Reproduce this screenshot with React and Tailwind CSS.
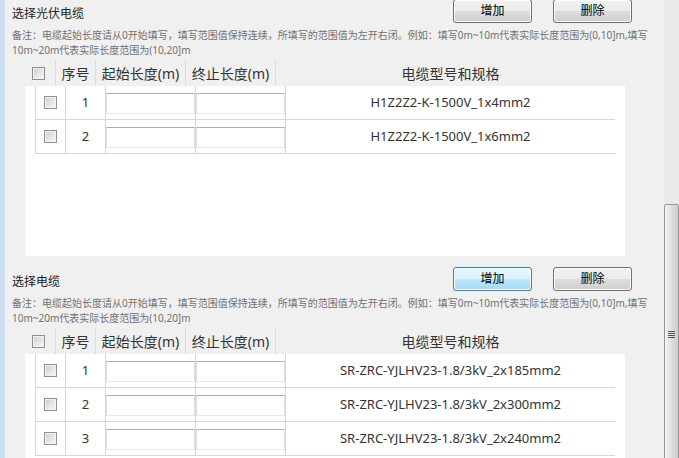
const pvRows = ['H1Z2Z2-K-1500V_1x4mm2', 'H1Z2Z2-K-1500V_1x6mm2'];
const cableRows = [
  'SR-ZRC-YJLHV23-1.8/3kV_2x185mm2',
  'SR-ZRC-YJLHV23-1.8/3kV_2x300mm2',
  'SR-ZRC-YJLHV23-1.8/3kV_2x240mm2',
];

const Check = () => (
  <span className="block w-[13px] h-[13px] border border-[#8f8f8f] bg-linear-to-br from-[#cdcdcd] to-[#fbfbfb] shadow-[inset_0_0_0_1px_#f2f2f2]" />
);

const Btn = ({ focused, children }) => (
  <button
    className={`w-[79px] h-6 rounded-[3px] border text-[12px] leading-none text-black ${
      focused
        ? 'border-[#3c7fb1] bg-[linear-gradient(#eaf6fd_0%,#d9f0fc_50%,#bee6fd_50%,#a7d9f5_100%)] shadow-[inset_0_0_0_1px_#f4fbff]'
        : 'border-[#707070] bg-[linear-gradient(#f2f2f2_0%,#ebebeb_50%,#dddddd_50%,#cfcfcf_100%)] shadow-[inset_0_0_0_1px_#fcfcfc]'
    }`}
  >
    {children}
  </button>
);

const Field = () => (
  <div className="h-[21px] w-full bg-white border border-t-[#abadb3] border-l-[#dbdfe6] border-r-[#dbdfe6] border-b-[#e3e9ef]" />
);

function Section({ title, rows, focused }) {
  return (
    <div className="h-[268px] shrink-0 flex flex-col">
      {/* title + buttons */}
      <div className="h-6 flex items-center">
        <span className="flex-1 pl-[7px] pt-[5px] text-[12px] leading-none text-[#222]">{title}</span>
        <div className="flex gap-[21px] mr-[31px]">
          <Btn focused={focused}>增加</Btn>
          <Btn>删除</Btn>
        </div>
      </div>

      {/* note */}
      <div className="mt-[5px] pl-[7px] text-[10px] leading-[15px] text-[#707070] whitespace-nowrap">
        <p>备注：电缆起始长度请从0开始填写，填写范围值保持连续，所填写的范围值为左开右闭。例如：填写0m~10m代表实际长度范围为(0,10]m,填写</p>
        <p>10m~20m代表实际长度范围为(10,20]m</p>
      </div>

      {/* header */}
      <div className="mt-[2px] h-[26px] ml-[20px] flex text-[14px] text-[#333]">
        <div className="w-[30px] flex items-center pl-[7px]">
          <Check />
        </div>
        <div className="w-[40px] border-l border-[#dcdcdc] flex items-center justify-center">序号</div>
        <div className="w-[90px] border-l border-[#dcdcdc] flex items-center justify-center">起始长度(m)</div>
        <div className="w-[90px] border-l border-[#dcdcdc] flex items-center justify-center">终止长度(m)</div>
        <div className="w-[350px] border-l border-[#dcdcdc] flex items-center justify-center">电缆型号和规格</div>
      </div>

      {/* body */}
      <div className="ml-[20px] w-[600px] h-[170px] shrink-0 bg-white pl-[10px]">
        {rows.map((spec, i) => (
          <div key={spec} className="w-[580px] h-[34px] flex border-b border-[#d6d6d6] text-[13px] text-[#333]">
            <div className="w-[30px] border-l border-[#d6d6d6] flex items-center justify-center">
              <Check />
            </div>
            <div className="w-[40px] border-l border-[#d6d6d6] flex items-center justify-center">{i + 1}</div>
            <div className="w-[90px] border-l border-[#d6d6d6] pt-[7px]">
              <Field />
            </div>
            <div className="w-[90px] border-l border-[#d6d6d6] pt-[7px]">
              <Field />
            </div>
            <div className="flex-1 border-l border-[#d6d6d6] flex items-center justify-center">{spec}</div>
          </div>
        ))}
      </div>
    </div>
  );
}

export default function App() {
  return (
    <div className="w-[679px] h-[458px] overflow-hidden bg-[#f0f0f0] flex font-['Noto_Sans','Noto_Sans_CJK_SC',sans-serif]">
      <div className="w-[5px] shrink-0 bg-[#cddff1]" />

      <div className="flex-1 flex flex-col -mt-px overflow-hidden">
        <Section title="选择光伏电缆" rows={pvRows} />
        <Section title="选择电缆" rows={cableRows} focused />
      </div>

      {/* scrollbar */}
      <div className="w-4 shrink-0 bg-[#e9e9e9] border-l border-[#f3f3f3] pt-[204px]">
        <div className="h-[270px] rounded-[2px] border border-[#979797] bg-[linear-gradient(90deg,#f2f2f2,#dedede_50%,#cdcdcd)] flex flex-col items-center pt-[126px] gap-px">
          <span className="block w-[7px] h-px bg-[#555]" />
          <span className="block w-[7px] h-px bg-[#555]" />
          <span className="block w-[7px] h-px bg-[#555]" />
          <span className="block w-[7px] h-px bg-[#555]" />
        </div>
      </div>
    </div>
  );
}
